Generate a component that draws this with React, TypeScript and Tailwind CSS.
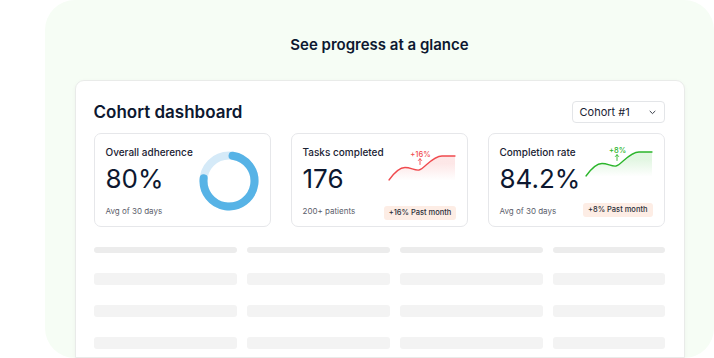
import React from "react";

const font = { fontFamily: "Inter, 'Noto Sans', sans-serif" };

// sparkline shared by the two trend cards
const LINE = "M5 34 C10 27 15 21.5 21 21.5 S30 24.5 35 24 S48 10 58 10 S68 10 71 10";

function Spark({ id, color, fill, label, top }: { id: string; color: string; fill: string; label: string; top: string }) {
  return (
    <svg width="72" height="48" viewBox="0 0 72 48" className={top}>
      <defs>
        <linearGradient id={id} x1="0" y1="0" x2="0" y2="1">
          <stop offset="0.2" stopColor={fill} stopOpacity="0.16" />
          <stop offset="0.65" stopColor={fill} stopOpacity="0" />
        </linearGradient>
      </defs>
      <path d={`${LINE} L71 48 L5 48 Z`} fill={`url(#${id})`} />
      <path d={LINE} fill="none" stroke={color} strokeWidth="1.3" strokeLinecap="round" />
      <text x="36.5" y="10.5" textAnchor="middle" fontSize="7.5" fontWeight="500" fill={color} style={font}>
        {label}
      </text>
      <path d="M36 18.5 V12.8 M34.4 14.5 L36 12.7 L37.6 14.5" fill="none" stroke={color} strokeWidth="0.9" strokeLinecap="round" />
    </svg>
  );
}

function Donut() {
  const r = 25.5;
  const c = 2 * Math.PI * r;
  return (
    <svg width="60" height="60" viewBox="0 0 60 60" className="mt-[5px]">
      <circle cx="30" cy="30" r={r} fill="none" stroke="#d5eaf8" strokeWidth="8" />
      <circle
        cx="30"
        cy="30"
        r={r}
        fill="none"
        stroke="#57b3e6"
        strokeWidth="8"
        strokeLinecap="round"
        strokeDasharray={`${c * 0.74} ${c}`}
        transform="rotate(-82 30 30)"
      />
    </svg>
  );
}

function StatCard({ label, value, note, right }: { label: string; value: string; note: string; right: React.ReactNode }) {
  return (
    <div className="flex h-[94px] justify-between rounded-[7px] border border-[#e6e7ea] bg-white px-[11px] pt-[12px]">
      <div className="flex flex-col whitespace-nowrap">
        <div className="text-[10px] leading-[12px] font-medium text-[#1a2233]">{label}</div>
        <div className="mt-[8px] text-[26px] leading-[26px] text-[#0d1830]">{value}</div>
        <div className="mt-[14px] text-[8px] leading-[10px] text-[#5b606b]">{note}</div>
      </div>
      <div className="flex shrink-0 flex-col items-end">{right}</div>
    </div>
  );
}

function Badge({ text, mt }: { text: string; mt: string }) {
  return (
    <div
      className={`${mt} flex h-[14px] items-center rounded-[3px] bg-[#fdede5] px-[5px] text-[7.5px] font-medium whitespace-nowrap text-[#2a2f3a]`}
    >
      {text}
    </div>
  );
}

export default function App() {
  const cols = [0, 1, 2, 3];
  return (
    <div className="h-[358px] w-[714px] overflow-hidden bg-white" style={font}>
      <div className="ml-[45px] flex h-[358px] w-[669px] flex-col items-center overflow-hidden rounded-[30px] bg-[#f6fdf5]">
        <h2 className="mt-[36px] text-[15px] leading-[18px] font-semibold text-[#0d1830]">See progress at a glance</h2>
        <div className="mt-[26px] w-[610px] flex-1 rounded-t-[9px] border border-[#e9ebe9] bg-white pt-[20px] pr-[19px] pl-[18px] shadow-[0_1px_4px_rgba(0,0,0,0.04)]">
          <div className="flex h-[22px] items-center justify-between">
            <h1 className="text-[17px] leading-[20px] font-semibold text-[#0d1830]">Cohort dashboard</h1>
            <div className="flex h-[22px] w-[93px] items-center justify-between rounded-[4px] border border-[#e3e5e8] pr-[8px] pl-[7px] text-[11px] text-[#1a2233]">
              <span>Cohort #1</span>
              <svg width="7" height="5" viewBox="0 0 7 5">
                <path d="M1 1.2 L3.5 3.6 L6 1.2" fill="none" stroke="#3a3f4a" strokeWidth="1" strokeLinecap="round" />
              </svg>
            </div>
          </div>

          <div className="mt-[10px] grid grid-cols-3 gap-[20px]">
            <StatCard label="Overall adherence" value="80%" note="Avg of 30 days" right={<Donut />} />
            <StatCard
              label="Tasks completed"
              value="176"
              note="200+ patients"
              right={
                <>
                  <Spark id="red" color="#f04a4e" fill="#f46a6a" label="+16%" top="" />
                  <Badge text="+16% Past month" mt="mt-[12px]" />
                </>
              }
            />
            <StatCard
              label="Completion rate"
              value="84.2%"
              note="Avg of 30 days"
              right={
                <>
                  <Spark id="green" color="#2bb52b" fill="#4cc94c" label="+8%" top="-mt-[4px]" />
                  <Badge text="+8% Past month" mt="mt-[13px]" />
                </>
              }
            />
          </div>

          <div className="mt-[20px] grid grid-cols-[143px_143px_143px_112px] gap-x-[10px] gap-y-[20px]">
            {cols.map((c) => (
              <div key={`h${c}`} className="h-[6px] rounded-full bg-[#ececec]" />
            ))}
            {[0, 1, 2].map((r) =>
              cols.map((c) => <div key={`${r}-${c}`} className="h-[12px] rounded-[3px] bg-[#f3f3f3]" />)
            )}
          </div>
        </div>
      </div>
    </div>
  );
}
